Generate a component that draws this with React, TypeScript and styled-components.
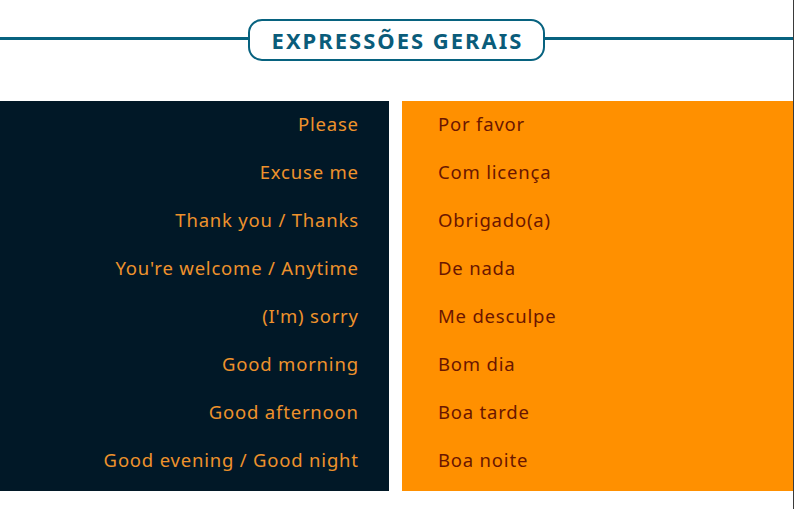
import styled, { createGlobalStyle } from 'styled-components';

const GlobalStyle = createGlobalStyle`
  html, body {
    margin: 0;
    padding: 0;
    background: #ffffff;
  }
  body {
    font-family: "Noto Sans", Lato, sans-serif;
  }
`;

const rows = [
  ['Please', 'Por favor'],
  ['Excuse me', 'Com licença'],
  ['Thank you / Thanks', 'Obrigado(a)'],
  ["You're welcome / Anytime", 'De nada'],
  ["(I'm) sorry", 'Me desculpe'],
  ['Good morning', 'Bom dia'],
  ['Good afternoon', 'Boa tarde'],
  ['Good evening / Good night', 'Boa noite'],
];

export default function App() {
  return (
    <>
      <GlobalStyle />
      <Page>
        <Header>
          <Rule />
          <Pill>EXPRESSÕES GERAIS</Pill>
          <Rule />
        </Header>
        <Panels>
          <Column dark>
            {rows.map(([en]) => (
              <Phrase key={en} dark>{en}</Phrase>
            ))}
          </Column>
          <Column>
            {rows.map(([en, pt]) => (
              <Phrase key={en}>{pt}</Phrase>
            ))}
          </Column>
        </Panels>
      </Page>
    </>
  );
}

const Page = styled.div`
  width: 793px;
  height: 509px;
  border-right: 1px solid #3a3a3a;
`;

const Header = styled.div`
  display: flex;
  align-items: flex-start;
  padding-top: 19px;
  margin-bottom: 40px;
`;

const Rule = styled.div`
  flex: 1;
  height: 3px;
  margin-top: 17.5px;
  background: #07627f;
`;

const Pill = styled.div`
  box-sizing: border-box;
  width: 297px;
  height: 42px;
  border: 2px solid #07627f;
  border-radius: 14px;
  display: flex;
  align-items: center;
  justify-content: center;
  padding-left: 2px;
  font-size: 22px;
  font-weight: 700;
  color: #0a5c7a;
  letter-spacing: 2px;
`;

const Panels = styled.div`
  display: flex;
  gap: 13px;
  height: 390px;
`;

const Column = styled.div<{ dark?: boolean }>`
  box-sizing: border-box;
  display: flex;
  flex-direction: column;
  ${({ dark }) =>
    dark
      ? `width: 389px; background: #011827; padding-right: 30.2px; align-items: flex-end;`
      : `flex: 1; background: #ff9000; padding-left: 36px; align-items: flex-start;`}
`;

const Phrase = styled.div<{ dark?: boolean }>`
  height: 48px;
  line-height: 46px;
  font-size: 18.5px;
  letter-spacing: 0.8px;
  color: ${({ dark }) => (dark ? '#ee922c' : '#6a1600')};
  white-space: nowrap;
`;
